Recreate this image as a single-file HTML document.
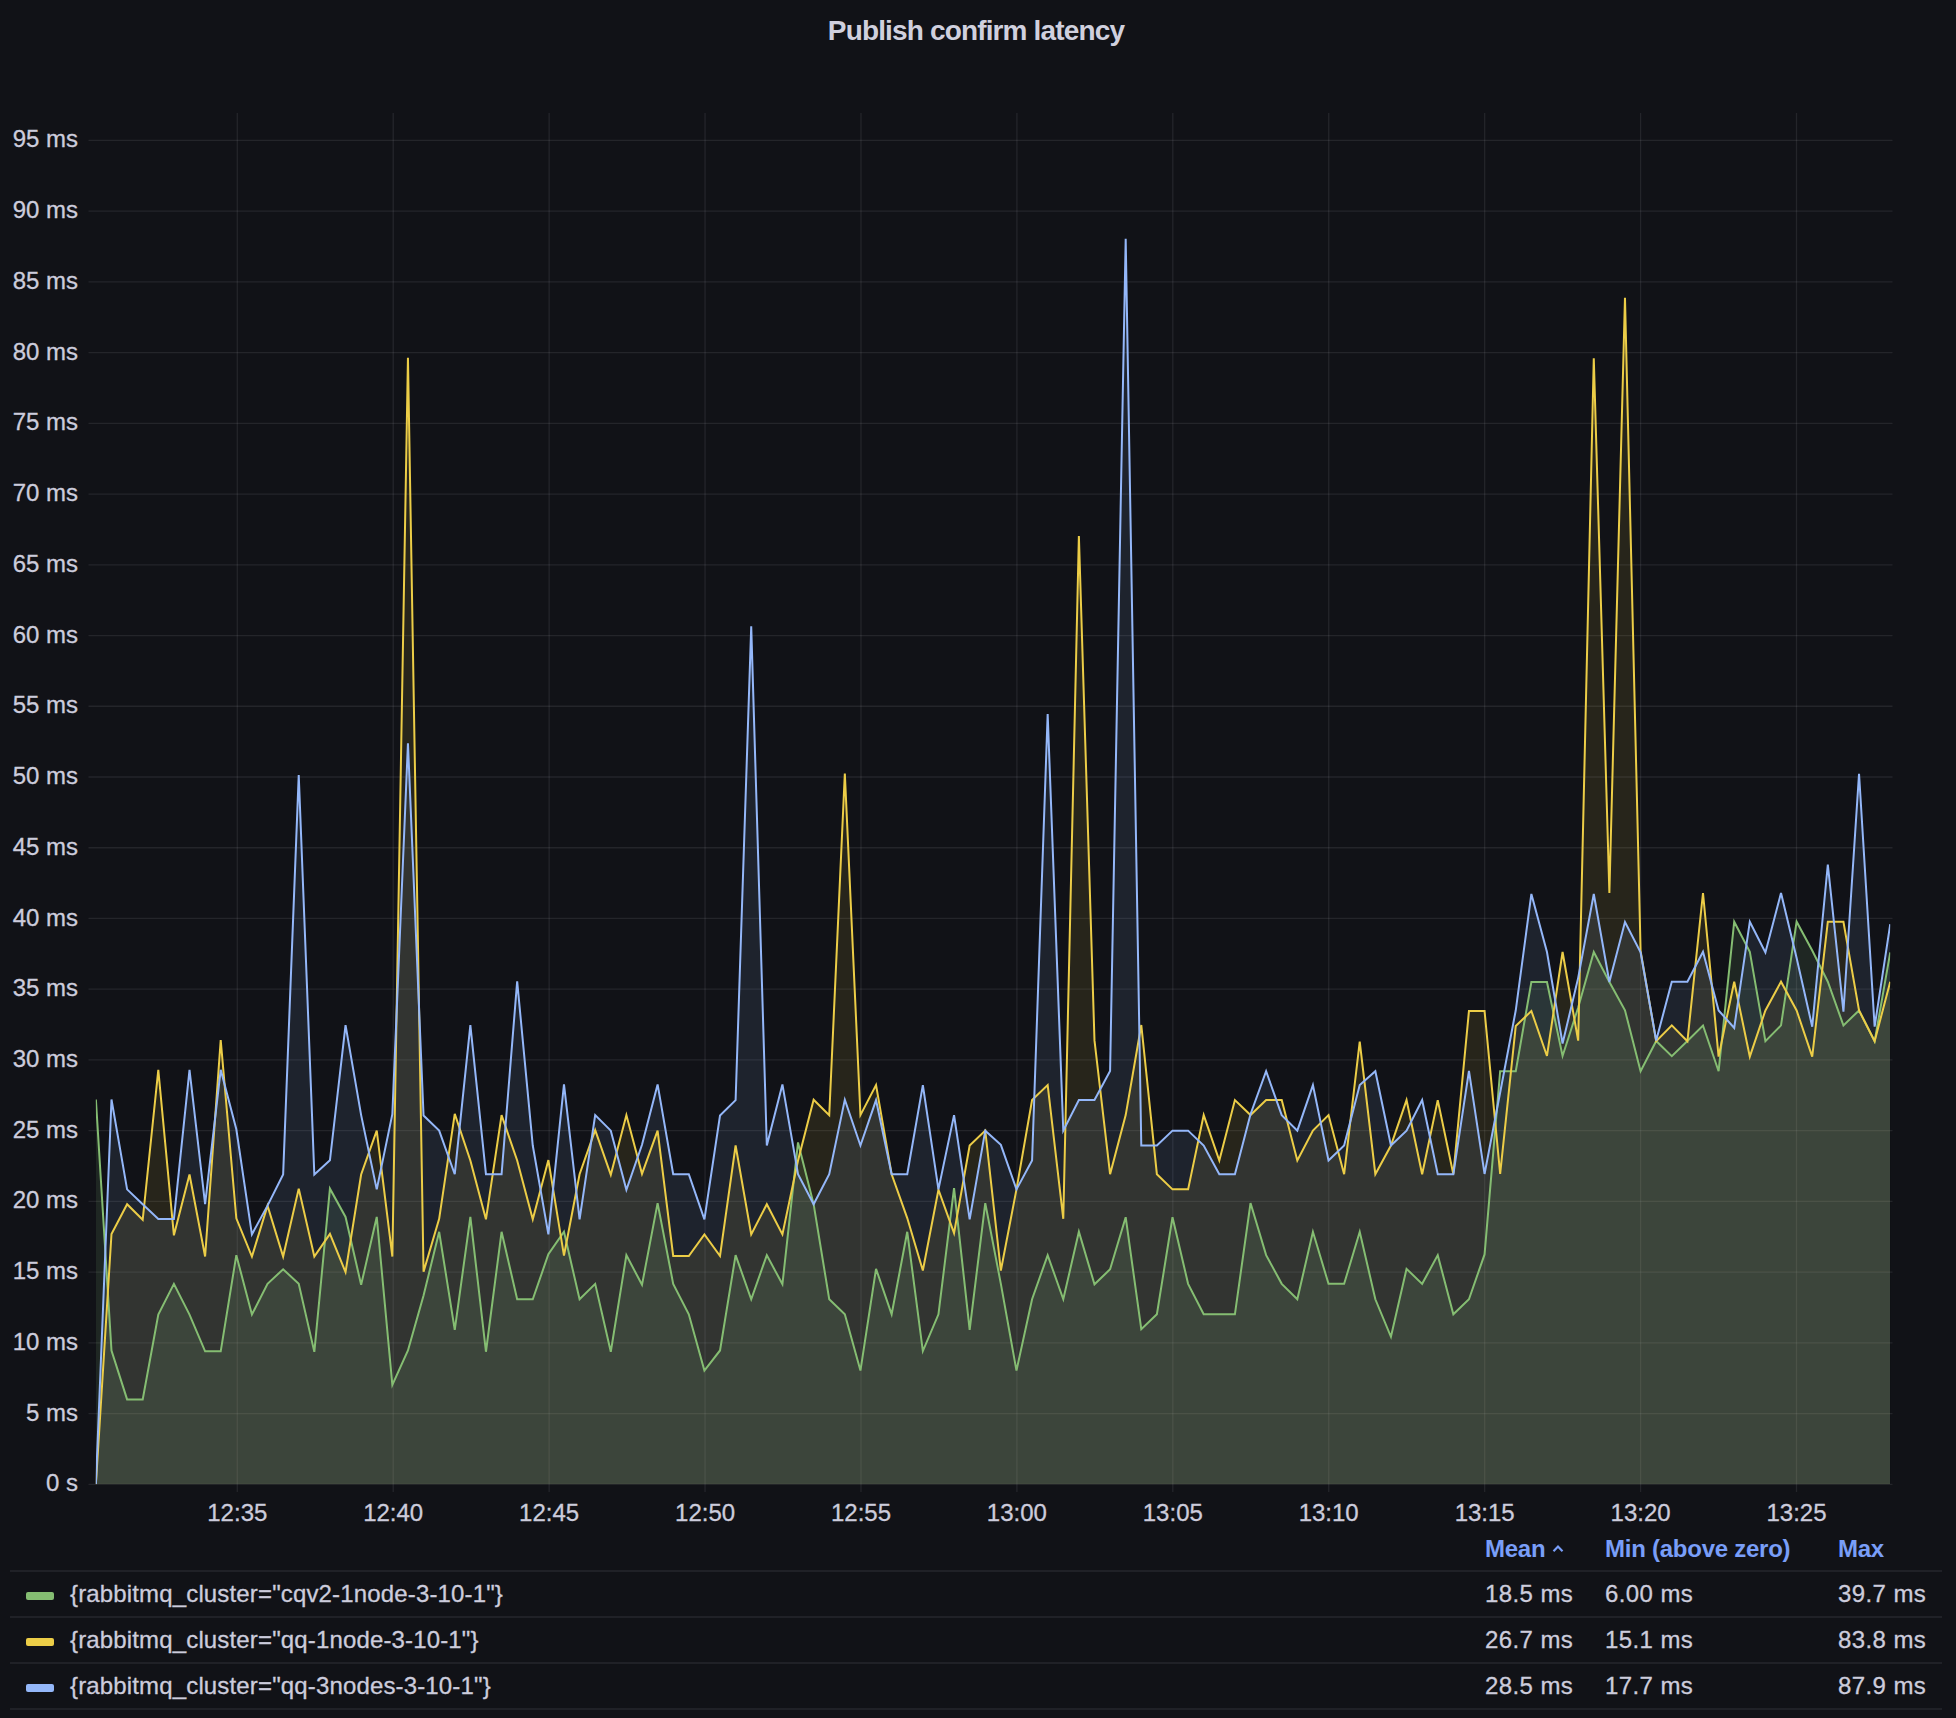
<!DOCTYPE html>
<html><head><meta charset="utf-8">
<style>
html,body{margin:0;padding:0;}
body{width:1956px;height:1718px;background:#111217;position:relative;overflow:hidden;font-family:"Liberation Sans",sans-serif;color:#ccccdc;}
.title{position:absolute;left:0;width:1952px;top:12.5px;text-align:center;font-size:28px;font-weight:bold;color:#d0d0de;line-height:36px;letter-spacing:-0.85px;}
svg{position:absolute;left:0;top:0;}
.yl{position:absolute;right:1878px;font-size:24px;line-height:28px;white-space:nowrap;color:#ccccdc;-webkit-text-stroke:0.3px #ccccdc;}
.xl{position:absolute;top:1496.5px;width:120px;text-align:center;font-size:24px;line-height:32px;color:#ccccdc;-webkit-text-stroke:0.3px #ccccdc;}
.hdr{position:absolute;top:1535px;font-size:24px;line-height:28px;color:#799EF8;font-weight:bold;white-space:nowrap;letter-spacing:-0.25px;}
.row{position:absolute;left:10px;width:1932px;height:46px;border-top:2px solid #202127;box-sizing:border-box;}
.sw{position:absolute;left:16px;top:20px;width:28px;height:8px;border-radius:2px;}
.lname{position:absolute;left:60px;top:6.3px;font-size:24px;line-height:32px;white-space:nowrap;color:#ccccdc;letter-spacing:0.15px;-webkit-text-stroke:0.3px #ccccdc;}
.val{position:absolute;top:6px;font-size:24px;line-height:32px;white-space:nowrap;color:#ccccdc;margin-left:-10px;letter-spacing:0.4px;-webkit-text-stroke:0.3px #ccccdc;}
.bot{position:absolute;left:10px;width:1932px;top:1708px;border-top:2px solid #202127;}
</style></head><body>
<div class="title">Publish confirm latency</div>
<svg width="1956" height="1718" viewBox="0 0 1956 1718">
<g stroke="rgba(204,204,220,0.1)" stroke-width="1.3"><line x1="88.5" y1="1484.30" x2="1892.5" y2="1484.30"/><line x1="88.5" y1="1413.57" x2="1892.5" y2="1413.57"/><line x1="88.5" y1="1342.84" x2="1892.5" y2="1342.84"/><line x1="88.5" y1="1272.11" x2="1892.5" y2="1272.11"/><line x1="88.5" y1="1201.38" x2="1892.5" y2="1201.38"/><line x1="88.5" y1="1130.65" x2="1892.5" y2="1130.65"/><line x1="88.5" y1="1059.92" x2="1892.5" y2="1059.92"/><line x1="88.5" y1="989.19" x2="1892.5" y2="989.19"/><line x1="88.5" y1="918.46" x2="1892.5" y2="918.46"/><line x1="88.5" y1="847.73" x2="1892.5" y2="847.73"/><line x1="88.5" y1="777.00" x2="1892.5" y2="777.00"/><line x1="88.5" y1="706.27" x2="1892.5" y2="706.27"/><line x1="88.5" y1="635.54" x2="1892.5" y2="635.54"/><line x1="88.5" y1="564.81" x2="1892.5" y2="564.81"/><line x1="88.5" y1="494.08" x2="1892.5" y2="494.08"/><line x1="88.5" y1="423.35" x2="1892.5" y2="423.35"/><line x1="88.5" y1="352.62" x2="1892.5" y2="352.62"/><line x1="88.5" y1="281.89" x2="1892.5" y2="281.89"/><line x1="88.5" y1="211.16" x2="1892.5" y2="211.16"/><line x1="88.5" y1="140.43" x2="1892.5" y2="140.43"/><line x1="237.30" y1="113" x2="237.30" y2="1492"/><line x1="393.22" y1="113" x2="393.22" y2="1492"/><line x1="549.14" y1="113" x2="549.14" y2="1492"/><line x1="705.06" y1="113" x2="705.06" y2="1492"/><line x1="860.98" y1="113" x2="860.98" y2="1492"/><line x1="1016.90" y1="113" x2="1016.90" y2="1492"/><line x1="1172.82" y1="113" x2="1172.82" y2="1492"/><line x1="1328.74" y1="113" x2="1328.74" y2="1492"/><line x1="1484.66" y1="113" x2="1484.66" y2="1492"/><line x1="1640.58" y1="113" x2="1640.58" y2="1492"/><line x1="1796.50" y1="113" x2="1796.50" y2="1492"/></g><defs><clipPath id="pc"><rect x="95.8" y="100" width="1794.4" height="1384.3"/></clipPath></defs><g clip-path="url(#pc)"><path d="M95.89,1099.53 L111.49,1350.62 L127.10,1399.42 L142.70,1399.42 L158.30,1314.55 L173.91,1283.85 L189.51,1314.55 L205.11,1351.33 L220.71,1351.33 L236.32,1255.13 L251.92,1314.55 L267.52,1283.85 L283.13,1269.28 L298.73,1283.85 L314.33,1351.89 L329.94,1188.65 L345.54,1216.94 L361.14,1284.84 L376.74,1216.94 L392.35,1384.85 L407.95,1350.48 L423.55,1295.59 L439.16,1231.79 L454.76,1329.83 L470.36,1216.80 L485.96,1351.75 L501.57,1231.79 L517.17,1299.27 L532.77,1299.27 L548.38,1254.29 L563.98,1231.79 L579.58,1299.27 L595.19,1283.85 L610.79,1351.75 L626.39,1255.13 L642.00,1284.84 L657.60,1203.08 L673.20,1283.85 L688.80,1314.27 L704.41,1370.57 L720.01,1350.48 L735.61,1255.13 L751.22,1299.27 L766.82,1255.13 L782.42,1284.28 L798.02,1142.39 L813.63,1204.21 L829.23,1299.27 L844.83,1314.27 L860.44,1370.57 L876.04,1268.86 L891.64,1314.27 L907.25,1231.79 L922.85,1351.04 L938.45,1314.27 L954.05,1188.08 L969.66,1329.83 L985.26,1203.08 L1000.86,1283.85 L1016.47,1370.57 L1032.07,1299.27 L1047.67,1255.13 L1063.28,1299.27 L1078.88,1231.79 L1094.48,1284.28 L1110.09,1269.28 L1125.69,1217.22 L1141.29,1329.26 L1156.89,1314.27 L1172.50,1217.22 L1188.10,1283.85 L1203.70,1314.27 L1219.31,1314.27 L1234.91,1314.27 L1250.51,1203.08 L1266.12,1255.13 L1281.72,1283.85 L1297.32,1299.27 L1312.92,1231.79 L1328.53,1283.85 L1344.13,1283.85 L1359.73,1231.79 L1375.34,1299.27 L1390.94,1336.76 L1406.54,1268.86 L1422.14,1283.85 L1437.75,1255.13 L1453.35,1314.27 L1468.95,1299.27 L1484.56,1254.43 L1500.16,1071.24 L1515.76,1071.24 L1531.37,981.98 L1546.97,981.98 L1562.57,1055.96 L1578.18,1007.58 L1593.78,951.99 L1609.38,981.98 L1624.98,1010.27 L1640.59,1071.24 L1656.19,1040.96 L1671.79,1056.10 L1687.40,1040.96 L1703.00,1025.55 L1718.60,1071.24 L1734.21,921.71 L1749.81,951.70 L1765.41,1041.25 L1781.01,1025.40 L1796.62,921.71 L1812.22,950.43 L1827.82,981.69 L1843.43,1025.40 L1859.03,1010.41 L1874.63,1041.25 L1890.24,952.41 L1890.24,1484.30 L95.89,1484.30 Z" fill="#85BD72" fill-opacity="0.13" stroke="none"/><path d="M95.89,1484.30 L111.49,1233.92 L127.10,1204.21 L142.70,1219.77 L158.30,1069.82 L173.91,1235.33 L189.51,1174.50 L205.11,1256.55 L220.71,1040.12 L236.32,1218.36 L251.92,1256.55 L267.52,1205.62 L283.13,1256.55 L298.73,1188.65 L314.33,1256.55 L329.94,1233.92 L345.54,1272.11 L361.14,1174.50 L376.74,1130.65 L392.35,1256.55 L407.95,357.85 L423.55,1271.83 L439.16,1218.78 L454.76,1113.82 L470.36,1160.50 L485.96,1219.35 L501.57,1115.09 L517.17,1160.50 L532.77,1219.35 L548.38,1160.07 L563.98,1255.56 L579.58,1174.22 L595.19,1130.08 L610.79,1174.79 L626.39,1115.09 L642.00,1173.80 L657.60,1130.65 L673.20,1255.98 L688.80,1255.98 L704.41,1234.34 L720.01,1255.98 L735.61,1145.50 L751.22,1234.34 L766.82,1204.21 L782.42,1234.34 L798.02,1160.50 L813.63,1099.67 L829.23,1115.23 L844.83,773.46 L860.44,1115.09 L876.04,1085.10 L891.64,1174.22 L907.25,1218.07 L922.85,1270.55 L938.45,1189.78 L954.05,1233.07 L969.66,1145.50 L985.26,1130.65 L1000.86,1270.55 L1016.47,1189.36 L1032.07,1100.09 L1047.67,1085.10 L1063.28,1218.78 L1078.88,535.95 L1094.48,1040.40 L1110.09,1174.22 L1125.69,1115.09 L1141.29,1024.98 L1156.89,1174.22 L1172.50,1189.36 L1188.10,1189.36 L1203.70,1115.09 L1219.31,1160.50 L1234.91,1100.09 L1250.51,1115.09 L1266.12,1100.09 L1281.72,1100.09 L1297.32,1160.50 L1312.92,1130.65 L1328.53,1115.09 L1344.13,1174.22 L1359.73,1041.53 L1375.34,1174.22 L1390.94,1145.50 L1406.54,1100.09 L1422.14,1174.22 L1437.75,1100.09 L1453.35,1174.22 L1468.95,1011.12 L1484.56,1011.12 L1500.16,1173.80 L1515.76,1025.97 L1531.37,1010.97 L1546.97,1055.96 L1562.57,951.99 L1578.18,1040.68 L1593.78,358.28 L1609.38,892.86 L1624.98,297.73 L1640.59,951.00 L1656.19,1041.25 L1671.79,1025.40 L1687.40,1041.25 L1703.00,893.00 L1718.60,1056.67 L1734.21,981.69 L1749.81,1056.67 L1765.41,1010.41 L1781.01,981.69 L1796.62,1010.41 L1812.22,1056.67 L1827.82,921.71 L1843.43,921.71 L1859.03,1010.41 L1874.63,1041.25 L1890.24,981.69 L1890.24,1484.30 L95.89,1484.30 Z" fill="#ECCD47" fill-opacity="0.1" stroke="none"/><path d="M95.89,1484.30 L111.49,1099.53 L127.10,1189.36 L142.70,1204.21 L158.30,1218.92 L173.91,1218.92 L189.51,1069.82 L205.11,1204.21 L220.71,1069.82 L236.32,1129.24 L251.92,1234.34 L267.52,1205.62 L283.13,1174.50 L298.73,775.16 L314.33,1174.50 L329.94,1160.36 L345.54,1025.12 L361.14,1115.09 L376.74,1189.36 L392.35,1114.24 L407.95,743.19 L423.55,1115.51 L439.16,1130.65 L454.76,1174.22 L470.36,1025.12 L485.96,1174.22 L501.57,1174.22 L517.17,981.41 L532.77,1145.50 L548.38,1234.34 L563.98,1084.39 L579.58,1219.35 L595.19,1115.09 L610.79,1130.65 L626.39,1189.78 L642.00,1144.80 L657.60,1084.39 L673.20,1174.22 L688.80,1174.22 L704.41,1219.35 L720.01,1115.51 L735.61,1100.09 L751.22,626.20 L766.82,1145.50 L782.42,1084.39 L798.02,1174.22 L813.63,1204.21 L829.23,1174.22 L844.83,1099.67 L860.44,1145.50 L876.04,1100.09 L891.64,1174.22 L907.25,1174.22 L922.85,1085.10 L938.45,1189.36 L954.05,1115.09 L969.66,1219.35 L985.26,1130.65 L1000.86,1144.80 L1016.47,1189.36 L1032.07,1160.50 L1047.67,714.05 L1063.28,1130.65 L1078.88,1100.09 L1094.48,1100.09 L1110.09,1070.95 L1125.69,238.74 L1141.29,1145.50 L1156.89,1145.50 L1172.50,1130.65 L1188.10,1130.65 L1203.70,1145.50 L1219.31,1174.22 L1234.91,1174.22 L1250.51,1114.24 L1266.12,1071.24 L1281.72,1115.09 L1297.32,1130.65 L1312.92,1085.10 L1328.53,1160.50 L1344.13,1145.50 L1359.73,1085.10 L1375.34,1071.24 L1390.94,1145.50 L1406.54,1130.65 L1422.14,1100.09 L1437.75,1174.22 L1453.35,1174.22 L1468.95,1070.95 L1484.56,1173.94 L1500.16,1092.46 L1515.76,1010.27 L1531.37,893.99 L1546.97,951.99 L1562.57,1043.51 L1578.18,977.87 L1593.78,893.99 L1609.38,981.98 L1624.98,922.00 L1640.59,952.41 L1656.19,1040.54 L1671.79,981.69 L1687.40,981.69 L1703.00,951.70 L1718.60,1010.41 L1734.21,1027.95 L1749.81,921.71 L1765.41,952.41 L1781.01,893.00 L1796.62,958.07 L1812.22,1026.68 L1827.82,864.71 L1843.43,1011.68 L1859.03,773.75 L1874.63,1026.68 L1890.24,924.12 L1890.24,1484.30 L95.89,1484.30 Z" fill="#94B7F9" fill-opacity="0.1" stroke="none"/><path d="M95.89,1099.53 L111.49,1350.62 L127.10,1399.42 L142.70,1399.42 L158.30,1314.55 L173.91,1283.85 L189.51,1314.55 L205.11,1351.33 L220.71,1351.33 L236.32,1255.13 L251.92,1314.55 L267.52,1283.85 L283.13,1269.28 L298.73,1283.85 L314.33,1351.89 L329.94,1188.65 L345.54,1216.94 L361.14,1284.84 L376.74,1216.94 L392.35,1384.85 L407.95,1350.48 L423.55,1295.59 L439.16,1231.79 L454.76,1329.83 L470.36,1216.80 L485.96,1351.75 L501.57,1231.79 L517.17,1299.27 L532.77,1299.27 L548.38,1254.29 L563.98,1231.79 L579.58,1299.27 L595.19,1283.85 L610.79,1351.75 L626.39,1255.13 L642.00,1284.84 L657.60,1203.08 L673.20,1283.85 L688.80,1314.27 L704.41,1370.57 L720.01,1350.48 L735.61,1255.13 L751.22,1299.27 L766.82,1255.13 L782.42,1284.28 L798.02,1142.39 L813.63,1204.21 L829.23,1299.27 L844.83,1314.27 L860.44,1370.57 L876.04,1268.86 L891.64,1314.27 L907.25,1231.79 L922.85,1351.04 L938.45,1314.27 L954.05,1188.08 L969.66,1329.83 L985.26,1203.08 L1000.86,1283.85 L1016.47,1370.57 L1032.07,1299.27 L1047.67,1255.13 L1063.28,1299.27 L1078.88,1231.79 L1094.48,1284.28 L1110.09,1269.28 L1125.69,1217.22 L1141.29,1329.26 L1156.89,1314.27 L1172.50,1217.22 L1188.10,1283.85 L1203.70,1314.27 L1219.31,1314.27 L1234.91,1314.27 L1250.51,1203.08 L1266.12,1255.13 L1281.72,1283.85 L1297.32,1299.27 L1312.92,1231.79 L1328.53,1283.85 L1344.13,1283.85 L1359.73,1231.79 L1375.34,1299.27 L1390.94,1336.76 L1406.54,1268.86 L1422.14,1283.85 L1437.75,1255.13 L1453.35,1314.27 L1468.95,1299.27 L1484.56,1254.43 L1500.16,1071.24 L1515.76,1071.24 L1531.37,981.98 L1546.97,981.98 L1562.57,1055.96 L1578.18,1007.58 L1593.78,951.99 L1609.38,981.98 L1624.98,1010.27 L1640.59,1071.24 L1656.19,1040.96 L1671.79,1056.10 L1687.40,1040.96 L1703.00,1025.55 L1718.60,1071.24 L1734.21,921.71 L1749.81,951.70 L1765.41,1041.25 L1781.01,1025.40 L1796.62,921.71 L1812.22,950.43 L1827.82,981.69 L1843.43,1025.40 L1859.03,1010.41 L1874.63,1041.25 L1890.24,952.41" fill="none" stroke="#85BD72" stroke-width="2" stroke-linejoin="miter" stroke-miterlimit="4"/><path d="M95.89,1484.30 L111.49,1233.92 L127.10,1204.21 L142.70,1219.77 L158.30,1069.82 L173.91,1235.33 L189.51,1174.50 L205.11,1256.55 L220.71,1040.12 L236.32,1218.36 L251.92,1256.55 L267.52,1205.62 L283.13,1256.55 L298.73,1188.65 L314.33,1256.55 L329.94,1233.92 L345.54,1272.11 L361.14,1174.50 L376.74,1130.65 L392.35,1256.55 L407.95,357.85 L423.55,1271.83 L439.16,1218.78 L454.76,1113.82 L470.36,1160.50 L485.96,1219.35 L501.57,1115.09 L517.17,1160.50 L532.77,1219.35 L548.38,1160.07 L563.98,1255.56 L579.58,1174.22 L595.19,1130.08 L610.79,1174.79 L626.39,1115.09 L642.00,1173.80 L657.60,1130.65 L673.20,1255.98 L688.80,1255.98 L704.41,1234.34 L720.01,1255.98 L735.61,1145.50 L751.22,1234.34 L766.82,1204.21 L782.42,1234.34 L798.02,1160.50 L813.63,1099.67 L829.23,1115.23 L844.83,773.46 L860.44,1115.09 L876.04,1085.10 L891.64,1174.22 L907.25,1218.07 L922.85,1270.55 L938.45,1189.78 L954.05,1233.07 L969.66,1145.50 L985.26,1130.65 L1000.86,1270.55 L1016.47,1189.36 L1032.07,1100.09 L1047.67,1085.10 L1063.28,1218.78 L1078.88,535.95 L1094.48,1040.40 L1110.09,1174.22 L1125.69,1115.09 L1141.29,1024.98 L1156.89,1174.22 L1172.50,1189.36 L1188.10,1189.36 L1203.70,1115.09 L1219.31,1160.50 L1234.91,1100.09 L1250.51,1115.09 L1266.12,1100.09 L1281.72,1100.09 L1297.32,1160.50 L1312.92,1130.65 L1328.53,1115.09 L1344.13,1174.22 L1359.73,1041.53 L1375.34,1174.22 L1390.94,1145.50 L1406.54,1100.09 L1422.14,1174.22 L1437.75,1100.09 L1453.35,1174.22 L1468.95,1011.12 L1484.56,1011.12 L1500.16,1173.80 L1515.76,1025.97 L1531.37,1010.97 L1546.97,1055.96 L1562.57,951.99 L1578.18,1040.68 L1593.78,358.28 L1609.38,892.86 L1624.98,297.73 L1640.59,951.00 L1656.19,1041.25 L1671.79,1025.40 L1687.40,1041.25 L1703.00,893.00 L1718.60,1056.67 L1734.21,981.69 L1749.81,1056.67 L1765.41,1010.41 L1781.01,981.69 L1796.62,1010.41 L1812.22,1056.67 L1827.82,921.71 L1843.43,921.71 L1859.03,1010.41 L1874.63,1041.25 L1890.24,981.69" fill="none" stroke="#ECCD47" stroke-width="2" stroke-linejoin="miter" stroke-miterlimit="4"/><path d="M95.89,1484.30 L111.49,1099.53 L127.10,1189.36 L142.70,1204.21 L158.30,1218.92 L173.91,1218.92 L189.51,1069.82 L205.11,1204.21 L220.71,1069.82 L236.32,1129.24 L251.92,1234.34 L267.52,1205.62 L283.13,1174.50 L298.73,775.16 L314.33,1174.50 L329.94,1160.36 L345.54,1025.12 L361.14,1115.09 L376.74,1189.36 L392.35,1114.24 L407.95,743.19 L423.55,1115.51 L439.16,1130.65 L454.76,1174.22 L470.36,1025.12 L485.96,1174.22 L501.57,1174.22 L517.17,981.41 L532.77,1145.50 L548.38,1234.34 L563.98,1084.39 L579.58,1219.35 L595.19,1115.09 L610.79,1130.65 L626.39,1189.78 L642.00,1144.80 L657.60,1084.39 L673.20,1174.22 L688.80,1174.22 L704.41,1219.35 L720.01,1115.51 L735.61,1100.09 L751.22,626.20 L766.82,1145.50 L782.42,1084.39 L798.02,1174.22 L813.63,1204.21 L829.23,1174.22 L844.83,1099.67 L860.44,1145.50 L876.04,1100.09 L891.64,1174.22 L907.25,1174.22 L922.85,1085.10 L938.45,1189.36 L954.05,1115.09 L969.66,1219.35 L985.26,1130.65 L1000.86,1144.80 L1016.47,1189.36 L1032.07,1160.50 L1047.67,714.05 L1063.28,1130.65 L1078.88,1100.09 L1094.48,1100.09 L1110.09,1070.95 L1125.69,238.74 L1141.29,1145.50 L1156.89,1145.50 L1172.50,1130.65 L1188.10,1130.65 L1203.70,1145.50 L1219.31,1174.22 L1234.91,1174.22 L1250.51,1114.24 L1266.12,1071.24 L1281.72,1115.09 L1297.32,1130.65 L1312.92,1085.10 L1328.53,1160.50 L1344.13,1145.50 L1359.73,1085.10 L1375.34,1071.24 L1390.94,1145.50 L1406.54,1130.65 L1422.14,1100.09 L1437.75,1174.22 L1453.35,1174.22 L1468.95,1070.95 L1484.56,1173.94 L1500.16,1092.46 L1515.76,1010.27 L1531.37,893.99 L1546.97,951.99 L1562.57,1043.51 L1578.18,977.87 L1593.78,893.99 L1609.38,981.98 L1624.98,922.00 L1640.59,952.41 L1656.19,1040.54 L1671.79,981.69 L1687.40,981.69 L1703.00,951.70 L1718.60,1010.41 L1734.21,1027.95 L1749.81,921.71 L1765.41,952.41 L1781.01,893.00 L1796.62,958.07 L1812.22,1026.68 L1827.82,864.71 L1843.43,1011.68 L1859.03,773.75 L1874.63,1026.68 L1890.24,924.12" fill="none" stroke="#94B7F9" stroke-width="2" stroke-linejoin="miter" stroke-miterlimit="4"/></g>
</svg>
<div class="yl" style="top:1469.3px">0 s</div><div class="yl" style="top:1398.6px">5 ms</div><div class="yl" style="top:1327.8px">10 ms</div><div class="yl" style="top:1257.1px">15 ms</div><div class="yl" style="top:1186.4px">20 ms</div><div class="yl" style="top:1115.6px">25 ms</div><div class="yl" style="top:1044.9px">30 ms</div><div class="yl" style="top:974.2px">35 ms</div><div class="yl" style="top:903.5px">40 ms</div><div class="yl" style="top:832.7px">45 ms</div><div class="yl" style="top:762.0px">50 ms</div><div class="yl" style="top:691.3px">55 ms</div><div class="yl" style="top:620.5px">60 ms</div><div class="yl" style="top:549.8px">65 ms</div><div class="yl" style="top:479.1px">70 ms</div><div class="yl" style="top:408.3px">75 ms</div><div class="yl" style="top:337.6px">80 ms</div><div class="yl" style="top:266.9px">85 ms</div><div class="yl" style="top:196.2px">90 ms</div><div class="yl" style="top:125.4px">95 ms</div>
<div class="xl" style="left:177.3px">12:35</div><div class="xl" style="left:333.2px">12:40</div><div class="xl" style="left:489.1px">12:45</div><div class="xl" style="left:645.1px">12:50</div><div class="xl" style="left:801.0px">12:55</div><div class="xl" style="left:956.9px">13:00</div><div class="xl" style="left:1112.8px">13:05</div><div class="xl" style="left:1268.7px">13:10</div><div class="xl" style="left:1424.7px">13:15</div><div class="xl" style="left:1580.6px">13:20</div><div class="xl" style="left:1736.5px">13:25</div>
<div class="hdr" style="left:1485px">Mean</div><svg style="position:absolute;left:1552px;top:1544px" width="12" height="9" viewBox="0 0 12 9"><polyline points="1.5,7.2 6,2.6 10.5,7.2" fill="none" stroke="#799EF8" stroke-width="2.2"/></svg>
<div class="hdr" style="left:1605px">Min (above zero)</div>
<div class="hdr" style="left:1838px">Max</div>
<div class="row" style="top:1570px">
<div class="sw" style="background:#85BD72"></div>
<div class="lname">{rabbitmq_cluster="cqv2-1node-3-10-1"}</div>
<div class="val" style="left:1485px">18.5 ms</div>
<div class="val" style="left:1605px">6.00 ms</div>
<div class="val" style="left:1838px">39.7 ms</div>
</div><div class="row" style="top:1616px">
<div class="sw" style="background:#ECCD47"></div>
<div class="lname">{rabbitmq_cluster="qq-1node-3-10-1"}</div>
<div class="val" style="left:1485px">26.7 ms</div>
<div class="val" style="left:1605px">15.1 ms</div>
<div class="val" style="left:1838px">83.8 ms</div>
</div><div class="row" style="top:1662px">
<div class="sw" style="background:#94B7F9"></div>
<div class="lname">{rabbitmq_cluster="qq-3nodes-3-10-1"}</div>
<div class="val" style="left:1485px">28.5 ms</div>
<div class="val" style="left:1605px">17.7 ms</div>
<div class="val" style="left:1838px">87.9 ms</div>
</div>
<div class="bot"></div>
</body></html>
